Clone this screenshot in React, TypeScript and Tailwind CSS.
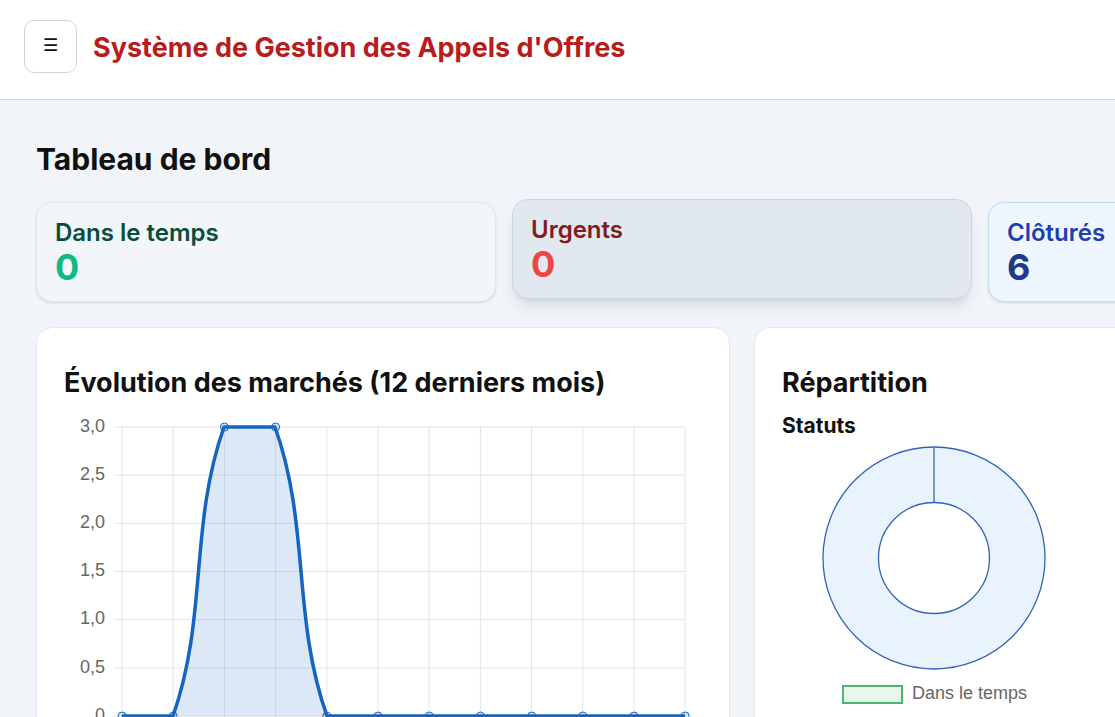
import React from "react";

const font = { fontFamily: "Inter, 'Noto Sans', sans-serif" };

type Stat = {
  label: string;
  value: number;
  box: string;
  labelColor: string;
  valueColor: string;
};

const stats: Stat[] = [
  {
    label: "Dans le temps",
    value: 0,
    box: "border-[#e2e8f0] bg-[#f2f5f9] shadow-sm",
    labelColor: "text-[#064e3b]",
    valueColor: "text-[#10b981]",
  },
  {
    label: "Urgents",
    value: 0,
    box: "border-[#cbd5e1] bg-[#e2e8f0] shadow-lg -translate-y-[3px]",
    labelColor: "text-[#7f1d1d]",
    valueColor: "text-[#ef4444]",
  },
  {
    label: "Clôturés",
    value: 6,
    box: "border-[#bfdbfe] bg-[#eff6ff] shadow-sm",
    labelColor: "text-[#1e40af]",
    valueColor: "text-[#1e3a8a]",
  },
];

const xs = Array.from({ length: 12 }, (_, i) => 122 + i * 51.2);
const data = [0, 0, 3, 3, 0, 0, 0, 0, 0, 0, 0, 0];
const yOf = (v: number) => 716 - (v / 3) * 289;
const ticks = ["3,0", "2,5", "2,0", "1,5", "1,0", "0,5", "0"];

const linePath =
  "M122 716 L173 716 C207.8 617.4 189.2 525.5 224 427 C230 427 268.9 427 275 427 C310.1 525.5 291.9 617.5 327 716 L685 716";

function LineChart() {
  return (
    <svg width={636} height={335} viewBox="64 405 636 335" className="block">
      {/* horizontal grid */}
      {ticks.map((t, i) => {
        const y = 427 + i * 48.17;
        return (
          <g key={t}>
            <line x1={114} x2={685} y1={y} y2={y} stroke="rgba(0,0,0,0.1)" strokeWidth={1} />
            <text
              x={105}
              y={y}
              textAnchor="end"
              dominantBaseline="middle"
              fontSize={18}
              fill="#666"
              fontFamily="'Liberation Sans', Arial, sans-serif"
            >
              {t}
            </text>
          </g>
        );
      })}
      {/* vertical grid */}
      {xs.map((x) => (
        <line key={x} x1={x} x2={x} y1={427} y2={740} stroke="rgba(0,0,0,0.1)" strokeWidth={1} />
      ))}
      <path d={`${linePath} L685 716 L122 716 Z`} fill="rgba(21,101,192,0.15)" />
      <path d={linePath} fill="none" stroke="#1565c0" strokeWidth={3.5} strokeLinejoin="round" />
      {xs.map((x, i) => (
        <circle
          key={i}
          cx={x}
          cy={yOf(data[i])}
          r={4}
          fill="rgba(21,101,192,0.15)"
          stroke="#1565c0"
          strokeWidth={1}
        />
      ))}
    </svg>
  );
}

function Donut() {
  const cx = 934;
  const cy = 558;
  return (
    <svg width={304} height={300} viewBox="782 436 304 300" className="block">
      <path
        d={`M${cx} ${cy - 111} A111 111 0 1 1 ${cx - 0.01} ${cy - 111} Z M${cx} ${cy - 55.5} A55.5 55.5 0 1 0 ${cx + 0.01} ${cy - 55.5} Z`}
        fill="#e8f3fe"
        fillRule="evenodd"
      />
      <circle cx={cx} cy={cy} r={111} fill="none" stroke="#3564b8" strokeWidth={1.3} />
      <circle cx={cx} cy={cy} r={55.5} fill="none" stroke="#3564b8" strokeWidth={1.3} />
      <line x1={cx} x2={cx} y1={cy - 111} y2={cy - 55.5} stroke="#3564b8" strokeWidth={1.3} />
      <rect x={843} y={686} width={59} height={17} fill="#e6f7ec" stroke="#4cb56f" strokeWidth={2} />
      <text
        x={912}
        y={694.5}
        dominantBaseline="middle"
        fontSize={18}
        fill="#666"
        fontFamily="'Liberation Sans', Arial, sans-serif"
      >
        Dans le temps
      </text>
    </svg>
  );
}

export default function App() {
  return (
    <div className="h-[717px] w-[1115px] overflow-hidden bg-[#f1f5f9]" style={font}>
      <header className="flex h-[100px] items-center gap-4 border-b border-[#d1d5db] bg-white px-6 pb-[7px]">
        <button
          type="button"
          className="flex h-[53px] w-[53px] shrink-0 items-center justify-center rounded-[10px] border border-[#d4d4d8] bg-white text-[17px] text-[#111]"
        >
          ☰
        </button>
        <h1 className="pt-1 text-[27px] font-bold text-[#b91c1c]">Système de Gestion des Appels d'Offres</h1>
      </header>

      <main className="w-[1484px] px-9 pt-[41px]">
        <h2 className="text-3xl leading-9 font-bold text-[#111]">Tableau de bord</h2>

        <div className="mt-[25px] grid grid-cols-3 gap-4">
          {stats.map((s) => (
            <div key={s.label} className={`h-[100px] rounded-2xl border px-[18px] pt-[18px] ${s.box}`}>
              <div className={`text-2xl leading-none font-semibold ${s.labelColor}`}>{s.label}</div>
              <div className={`mt-1 text-4xl leading-none font-bold ${s.valueColor}`}>{s.value}</div>
            </div>
          ))}
        </div>

        <div className="mt-[25px] grid grid-cols-2 gap-6">
          <section className="h-[420px] rounded-2xl border border-[#e2e8f0] bg-white px-[27px] pt-[39px]">
            <h3 className="text-[27px] leading-8 font-bold text-[#111]">Évolution des marchés (12 derniers mois)</h3>
            <div className="mt-[6px]">
              <LineChart />
            </div>
          </section>
          <section className="h-[420px] rounded-2xl border border-[#e2e8f0] bg-white px-[27px] pt-[39px]">
            <h3 className="text-[27px] leading-8 font-bold text-[#111]">Répartition</h3>
            <h4 className="mt-[13px] text-[21px] leading-7 font-bold text-[#111]">Statuts</h4>
            <div className="-mt-[4px]">
              <Donut />
            </div>
          </section>
        </div>
      </main>
    </div>
  );
}
